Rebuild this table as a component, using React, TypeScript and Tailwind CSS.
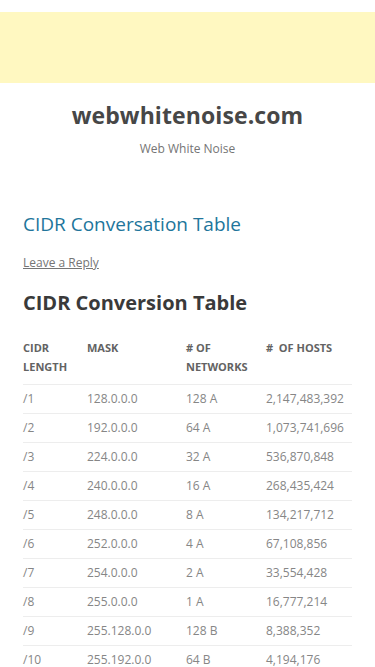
const rows = [
	["/1", "128.0.0.0", "128 A", "2,147,483,392"],
	["/2", "192.0.0.0", "64 A", "1,073,741,696"],
	["/3", "224.0.0.0", "32 A", "536,870,848"],
	["/4", "240.0.0.0", "16 A", "268,435,424"],
	["/5", "248.0.0.0", "8 A", "134,217,712"],
	["/6", "252.0.0.0", "4 A", "67,108,856"],
	["/7", "254.0.0.0", "2 A", "33,554,428"],
	["/8", "255.0.0.0", "1 A", "16,777,214"],
	["/9", "255.128.0.0", "128 B", "8,388,352"],
	["/10", "255.192.0.0", "64 B", "4,194,176"],
	["/11", "255.224.0.0", "32 B", "2,097,088"],
	["/12", "255.240.0.0", "16 B", "1,048,544"],
	["/13", "255.248.0.0", "8 B", "524,272"],
	["/14", "255.252.0.0", "4 B", "262,136"],
];

export default function App() {
	return (
		<div className="min-h-screen bg-white pt-3 font-['Open_Sans',sans-serif]">
			<div className="h-[71px] bg-[#fff8c1]" />

			<header className="text-center">
				<h1 className="mt-[17px] text-[23px] leading-[30px] font-bold text-[#474747] tracking-[0.1px]">
					webwhitenoise.com
				</h1>
				<p className="mt-[9px] text-[12px] leading-5 text-[#757575]">Web White Noise</p>
			</header>

			<main className="px-[23px]">
				<h2 className="mt-[52px] text-[19px] leading-[26px] text-[#21759b]">
					CIDR Conversation Table
				</h2>
				<a href="#" className="mt-[16px] block text-[12px] leading-5 text-[#757575] underline">
					Leave a Reply
				</a>
				<h3 className="mt-[17px] text-[20px] leading-[26px] font-bold text-[#3a3a3a]">
					CIDR Conversion Table
				</h3>

				<table className="mt-[22px] w-full border-collapse text-left">
					<thead>
						<tr className="text-[11px] leading-[19px] font-bold uppercase text-[#636363]">
							<th className="w-[64px] pb-[8px] align-top font-bold">CIDR<br />Length</th>
							<th className="w-[99px] pb-[8px] align-top font-bold">Mask</th>
							<th className="w-[80px] pb-[8px] align-top font-bold"># of<br />Networks</th>
							<th className="pb-[8px] align-top font-bold">#&nbsp; of Hosts</th>
						</tr>
					</thead>
					<tbody>
						{rows.map((r) => (
							<tr key={r[0]} className="border-t border-[#ededed] text-[12px] text-[#868686]">
								{r.map((c, i) => (
									<td key={i} className="h-[29px] align-middle">{c}</td>
								))}
							</tr>
						))}
					</tbody>
				</table>
			</main>
		</div>
	);
}
